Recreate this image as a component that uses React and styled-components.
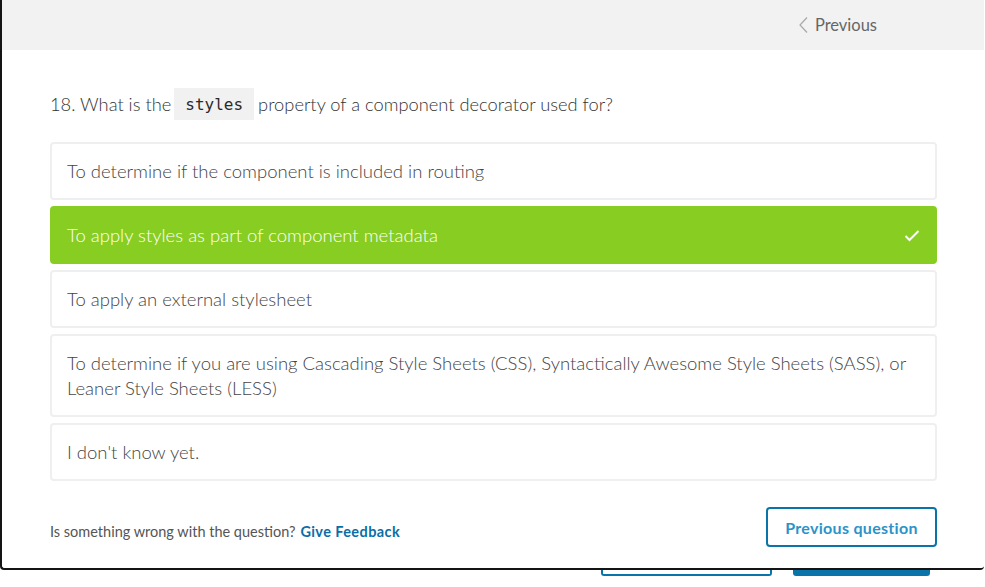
import React from "react";
import styled, { createGlobalStyle } from "styled-components";

const GlobalStyle = createGlobalStyle`
  html, body { margin: 0; padding: 0; background: #ffffff; }
  body { font-family: Lato, "Open Sans", Arial, sans-serif; }
  * { box-sizing: border-box; }
`;

const Page = styled.div`
  width: 985px;
  height: 587px;
  overflow: hidden;
  background: #ffffff;
`;

const Modal = styled.div`
  height: 570px;
  margin-right: 1px;
  background: #ffffff;
  border-left: 2px solid #141414;
  border-bottom: 2px solid #141414;
  border-radius: 0 0 4px 4px;
  display: flex;
  flex-direction: column;
  overflow: hidden;
`;

const Header = styled.div`
  height: 50px;
  flex: none;
  background: #f2f2f2;
  display: flex;
  justify-content: flex-end;
  align-items: center;
  padding-right: 107px;
  padding-bottom: 1px;
`;

const PrevLink = styled.a`
  display: flex;
  align-items: center;
  gap: 7px;
  font-size: 16.5px;
  color: #666666;
  text-decoration: none;
  cursor: pointer;
`;

const Body = styled.div`
  flex: 1;
  padding: 38px 47px 0 48px;
  display: flex;
  flex-direction: column;
`;

const Question = styled.div`
  display: flex;
  align-items: center;
  font-size: 18.3px;
  font-weight: 300;
  color: #333333;
  height: 32px;
`;

const Code = styled.code`
  display: inline-flex;
  align-items: center;
  height: 32px;
  margin: 0 4px 0 3px;
  padding: 0 11px;
  background: #f1f1f1;
  font-family: "DejaVu Sans Mono", "Liberation Mono", monospace;
  font-size: 16px;
  font-weight: 400;
  color: #2a2a2a;
`;

const Options = styled.div`
  margin-top: 22px;
  display: flex;
  flex-direction: column;
  gap: 6px;
`;

const Option = styled.div`
  display: flex;
  align-items: center;
  justify-content: space-between;
  padding: 14.5px 15px;
  border: 2px solid ${(p) => (p.$selected ? "#88cd22" : "#efefef")};
  border-radius: 4px;
  background: ${(p) => (p.$selected ? "#88cd22" : "#ffffff")};
  color: ${(p) => (p.$selected ? "#ffffff" : "#444444")};
  font-size: 18.5px;
  font-weight: 300;
  line-height: 25px;
`;

const Footer = styled.div`
  margin-top: 26px;
  display: flex;
  align-items: center;
  justify-content: space-between;
`;

const FeedbackText = styled.div`
  font-size: 14.5px;
  color: #555;
  padding-top: 8px;
`;

const FeedbackLink = styled.a`
  color: #0a6ea6;
  font-weight: 700;
  margin-left: 5px;
  letter-spacing: 0.4px;
  cursor: pointer;
`;

const OutlineButton = styled.button`
  width: 171px;
  height: 40px;
  border: 2px solid #0a74aa;
  border-radius: 4px;
  background: #fff;
  color: #2b93c9;
  font-family: Lato, "Open Sans", Arial, sans-serif;
  font-weight: 700;
  font-size: 16px;
  letter-spacing: 0.3px;
  cursor: pointer;
`;

const Backdrop = styled.div`
  display: flex;
  padding-left: 601px;
  gap: 21px;
`;

const PeekButton = styled.div`
  width: ${(p) => p.$w}px;
  height: 6px;
  border-radius: 0 0 3px 3px;
  background: ${(p) => (p.$filled ? "#0a74aa" : "#ffffff")};
  border: 2px solid #0a74aa;
  border-top: none;
`;

const Chevron = () => (
  <svg width="9" height="16" viewBox="0 0 9 16" fill="none">
    <polyline points="8,0.5 1,8 8,15.5" stroke="#a8a8a8" strokeWidth="1.2" />
  </svg>
);

const Check = () => (
  <svg width="16" height="13" viewBox="0 0 16 13" fill="none">
    <polyline points="1.5,7 5.5,11 14.5,2" stroke="#ffffff" strokeWidth="2" />
  </svg>
);

const options = [
  "To determine if the component is included in routing",
  "To apply styles as part of component metadata",
  "To apply an external stylesheet",
  "To determine if you are using Cascading Style Sheets (CSS), Syntactically Awesome Style Sheets (SASS), or Leaner Style Sheets (LESS)",
  "I don't know yet.",
];

export default function App() {
  return (
    <Page>
      <GlobalStyle />
      <Modal>
        <Header>
          <PrevLink>
            <Chevron />
            Previous
          </PrevLink>
        </Header>
        <Body>
          <Question>
            18. What is the<Code>styles</Code>property of a component decorator used for?
          </Question>
          <Options>
            {options.map((o, i) => (
              <Option key={i} $selected={i === 1}>
                <span>{o}</span>
                {i === 1 && <Check />}
              </Option>
            ))}
          </Options>
          <Footer>
            <FeedbackText>
              Is something wrong with the question?
              <FeedbackLink>Give Feedback</FeedbackLink>
            </FeedbackText>
            <OutlineButton>Previous question</OutlineButton>
          </Footer>
        </Body>
      </Modal>
      <Backdrop>
        <PeekButton $w={171} />
        <PeekButton $w={137} $filled />
      </Backdrop>
    </Page>
  );
}
